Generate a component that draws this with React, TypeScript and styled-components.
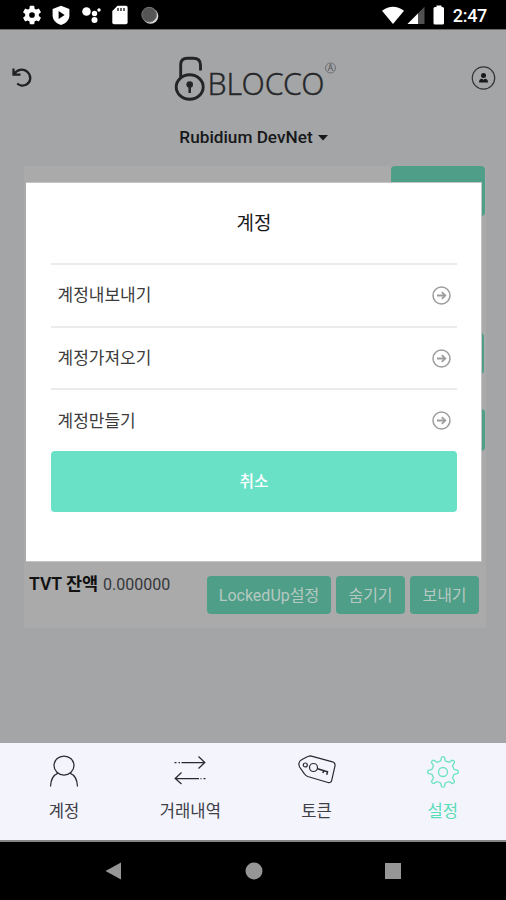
import React from "react";
import styled, { createGlobalStyle } from "styled-components";

const GlobalStyle = createGlobalStyle`
  * { box-sizing: border-box; }
  body { margin: 0; background: #a4a5a7; }
  button { border: 0; padding: 0; font: inherit; }
`;

const Phone = styled.div`
  width: 506px;
  height: 900px;
  display: flex;
  flex-direction: column;
  overflow: hidden;
  color: #17181a;
  font-family: Roboto, "Noto Sans CJK KR", sans-serif;
`;

const StatusBar = styled.header`
  height: 30px;
  flex: none;
  background: #000;
  border-bottom: 1px solid #686868;
  display: flex;
  justify-content: space-between;
  align-items: center;
  padding: 1px 19px 0 22px;
`;

const StatusGroup = styled.div<{ $gap: number }>`
  display: flex;
  align-items: center;
  gap: ${(p) => p.$gap}px;
`;

const Clock = styled.span`
  color: #fff;
  font-size: 18px;
  font-weight: 500;
  line-height: 20px;
  letter-spacing: -0.3px;
  margin-left: 2px;
  padding-top: 2px;
`;

const Screen = styled.main`
  position: relative;
  height: 713px;
  flex: none;
  background: #a4a5a7;
`;

const TopBar = styled.div`
  height: 90px;
  padding: 24px 10px 0 11px;
  display: flex;
  justify-content: space-between;
  align-items: flex-start;
`;

const IconSlot = styled.div<{ $top: number; $left?: number }>`
  display: flex;
  padding-top: ${(p) => p.$top}px;
  padding-left: ${(p) => p.$left ?? 0}px;
`;

const NetworkPicker = styled.div`
  height: 46px;
  padding: 5px 0 0 1px;
  display: flex;
  justify-content: center;
  align-items: flex-start;
  gap: 5px;
  font-size: 17.2px;
  font-weight: 500;
  line-height: 24px;
  svg { margin-top: 10px; }
`;

const Card = styled.section`
  width: 462px;
  height: 462px;
  margin-left: 24px;
  background: #aaaaaa;
  display: flex;
  flex-direction: column;
  align-items: flex-end;
`;

const ActionButton = styled.button<{ $w: number; $h: number }>`
  width: ${(p) => p.$w}px;
  height: ${(p) => p.$h}px;
  flex: none;
  border-radius: 4px;
  background: #4f9e88;
  color: #b5c9c1;
  font-size: 16px;
  line-height: 24px;
  padding-top: 2px;
  white-space: nowrap;
`;

const CardAction = styled.div<{ $top: number; $right: number }>`
  margin-top: ${(p) => p.$top}px;
  margin-right: ${(p) => p.$right}px;
  display: flex;
`;

const BalanceRow = styled.div`
  width: 100%;
  margin-top: 125px;
  padding: 0 7px 0 5px;
  display: flex;
  align-items: flex-start;
  justify-content: space-between;
`;

const Balance = styled.div`
  font-size: 16px;
  line-height: 24px;
  margin-top: -4px;
  white-space: nowrap;
  color: #36373a;
  b { font-size: 17.5px; color: #111; font-weight: 600; margin-right: 1px; }
`;

const Buttons = styled.div`
  display: flex;
  gap: 5px;
`;

const Dialog = styled.section`
  position: absolute;
  left: 26px;
  top: 152px;
  width: 456px;
  height: 380px;
  padding: 0 24px 0 25px;
  background: #fff;
  border: 1px solid #c4c4c4;
  border-width: 1px 1px 1px 0;
`;

const DialogTitle = styled.h1`
  margin: 0;
  height: 80px;
  padding-top: 29px;
  text-align: center;
  font-size: 19px;
  font-weight: 400;
  line-height: 24px;
`;

const MenuRow = styled.div`
  height: 62.7px;
  border-top: 2px solid #ebebeb;
  padding: 0 6px 0 6.5px;
  display: flex;
  align-items: center;
  justify-content: space-between;
  font-size: 17px;
  line-height: 24px;
  color: #3c3c3c;
`;

const CancelButton = styled.button`
  width: 100%;
  height: 61px;
  border-radius: 4px;
  background: #69e1c7;
  color: #fff;
  font-size: 15.7px;
  font-weight: 500;
  padding-bottom: 3px;
`;

const TabBar = styled.nav`
  height: 99px;
  flex: none;
  background: #f3f4fc;
  border-bottom: 2px solid #858588;
  display: grid;
  grid-template-columns: repeat(4, 1fr);
  padding-left: 1px;
`;

const Tab = styled.div<{ $active?: boolean }>`
  display: flex;
  flex-direction: column;
  align-items: center;
  padding-top: 11px;
  gap: 10px;
  font-size: 16.6px;
  line-height: 24px;
  color: ${(p) => (p.$active ? "#5bdcb9" : "#3e4046")};
  svg { display: block; }
`;

const SystemBar = styled.footer`
  height: 58px;
  flex: none;
  background: #000;
  display: flex;
  align-items: center;
  justify-content: space-between;
  padding: 0 105px 0 105px;
`;

const GEAR =
  "M19.14 12.94c.04-.3.06-.61.06-.94s-.02-.64-.07-.94l2.03-1.58a.49.49 0 0 0 .12-.61l-1.92-3.32a.49.49 0 0 0-.59-.22l-2.39.96a7 7 0 0 0-1.62-.94l-.36-2.54A.48.48 0 0 0 13.92 2.4h-3.84a.47.47 0 0 0-.47.41l-.36 2.54c-.59.24-1.13.57-1.62.94l-2.39-.96a.47.47 0 0 0-.59.22L2.74 8.87a.47.47 0 0 0 .12.61l2.03 1.58a7 7 0 0 0 0 1.88l-2.03 1.58a.49.49 0 0 0-.12.61l1.92 3.32c.12.22.37.29.59.22l2.39-.96c.5.38 1.03.7 1.62.94l.36 2.54c.05.24.24.41.48.41h3.84c.24 0 .44-.17.47-.41l.36-2.54a7 7 0 0 0 1.62-.94l2.39.96c.22.08.47 0 .59-.22l1.92-3.32a.47.47 0 0 0-.12-.61zM12 15a3 3 0 1 1 0-6 3 3 0 0 1 0 6z";

const SystemIcons = () => (
  <StatusGroup $gap={9.4}>
    <svg width="20" height="20" viewBox="1.5 1.5 21 21" fill="#fff"><path d={GEAR} fillRule="evenodd" /></svg>
    <svg width="20" height="21" viewBox="0 0 20 21">
      <path d="M10 .8 18.4 4v6.2c0 4.6-3.3 8-8.4 9.9C4.9 18.200 1.600 14.800 1.600 10.200V4z" fill="#fff" />
      <path d="m7.600 6 6 4-6 4z" fill="#000" />
    </svg>
    <svg width="21" height="20" viewBox="0 0 21 20" fill="#fff">
      <circle cx="5.500" cy="6.500" r="4.300" /><circle cx="13.500" cy="8.500" r="2.700" />
      <circle cx="18" cy="5" r="1.700" /><circle cx="13.500" cy="15" r="3" />
    </svg>
    <svg width="18" height="20" viewBox="0 0 18 20">
      <path d="M6.500 .8h8.500q1.600 0 1.600 1.600v15.200q0 1.600-1.600 1.600H2.900q-1.600 0-1.600-1.600V6z" fill="#fff" />
      <path d="M7 3v3M10 3v3M13 3v3" stroke="#333" strokeWidth="1.500" />
    </svg>
    <svg width="20" height="20" viewBox="0 0 20 20">
      <circle cx="11.500" cy="11" r="7.800" fill="#ddd" /><circle cx="10.200" cy="9.700" r="7.400" fill="#555" stroke="#777" />
    </svg>
  </StatusGroup>
);

const Signals = () => (
  <StatusGroup $gap={3}>
    <svg width="22" height="19" viewBox="0 0 22 19"><path d="M0 4.800Q11-3.500 22 4.800L11 18z" fill="#fff" /></svg>
    <svg width="18" height="19" viewBox="0 0 18 19">
      <path d="M17.500 .8V18H.5z" fill="#515151" /><path d="M11 7.400V18H.5z" fill="#fff" />
    </svg>
    <svg width="20" height="20" viewBox="0 0 20 20">
      <path d="M8.500 .5h5V2h1q1.500 0 1.500 1.500v14.500q0 1.500-1.500 1.500H7q-1.500 0-1.500-1.500V3.500Q5.500 2 7 2h1.500z" fill="#fff" />
    </svg>
    <Clock>2:47</Clock>
  </StatusGroup>
);

const Logo = () => (
  <svg width="166" height="50" viewBox="0 0 166 50">
    <g fill="none" stroke="#222426" strokeWidth="2.900">
      <path d="M6.700 24V10.500Q6.700 4.300 13.500 4.300H19Q26.500 4.300 26.500 11V16.500" />
      <ellipse cx="15.700" cy="33" rx="13.500" ry="12.200" />
    </g>
    <circle cx="15.700" cy="30.500" r="3.300" fill="#222426" />
    <path d="M15.700 31v8" stroke="#222426" strokeWidth="2.500" />
    <text x="33.500" y="41" textLength="117" lengthAdjust="spacingAndGlyphs" fill="#26282a" stroke="#26282a" strokeWidth=".35" fontFamily="Noto Sans, Open Sans, sans-serif" fontWeight="300" fontSize="30.500">BLOCCO</text>
    <circle cx="156.500" cy="14" r="5" fill="none" stroke="#5e6062" strokeWidth=".8" />
    <text x="156.500" y="17.200" textAnchor="middle" fill="#4f5153" fontFamily="Noto Sans, sans-serif" fontSize="8.500">A</text>
  </svg>
);

const Arrow = () => (
  <svg width="19" height="19" viewBox="0 0 19 19" fill="none" stroke="#9d9d9d" strokeWidth="1.500">
    <circle cx="9.500" cy="9.500" r="8.500" />
    <path d="M5 9.500h8" strokeWidth="2" /><path d="m9.800 6.200 3.500 3.300-3.500 3.300" strokeWidth="1.800" />
  </svg>
);

const PersonIcon = () => (
  <svg width="36" height="36" viewBox="0 0 36 36" fill="none" stroke="#292b2e" strokeWidth="1.250">
    <ellipse cx="18" cy="11.500" rx="10" ry="9.500" />
    <path d="M4.500 32.500c.2-6 2.700-11.300 7.600-13.300M31.500 32.500c-.2-6-2.700-11.300-7.600-13.300" />
  </svg>
);
const TransferIcon = () => (
  <svg width="36" height="36" viewBox="0 0 36 36" fill="none" stroke="#292b2e" strokeWidth="1.250">
    <path d="M2.500 8.500h2M6.500 8.500h1.500M9.500 8.500h23M26.500 2.500l6.300 6-6.300 6M27 24.500H3M9.500 18.500l-6.300 6 6.300 5.500M28.500 24.500h1M31.500 24.500h2" />
  </svg>
);
const TagIcon = () => (
  <svg width="42" height="36" viewBox="0 0 42 36" fill="none" stroke="#292b2e" strokeWidth="1.200">
    <path d="m14.500 1.800 22 6q3 .9 2.500 4l-3.300 14.500q-.7 3-3.700 2.200L11.700 22.500q-2.200-.8-3.300-2.700L3.600 13q-2.200-5 2-7.300l3.700-2q2.500-1.600 5.200-1.900z" />
    <circle cx="9.300" cy="11" r="2" /><circle cx="17.500" cy="13.500" r="4" />
    <path d="m21.500 14.700 10 3-.8 3M27.600 16.700l-.7 2.300" strokeWidth="1.500" />
  </svg>
);
const SettingsIcon = () => (
  <svg width="36" height="36" viewBox="0 0 36 36" fill="none" stroke="#6ee2c4" strokeWidth="1.300">
    <path strokeLinejoin="round" d="M15.700 6.800 16.600 3q1.400-.8 2.800 0l.9 3.800 3.700 1.500 3.400-2.200q1.800.3 2.200 2.200L27.500 11.700 29 15.300l3.800 1q1 1.700 0 3L29 20.300 27.500 24l2.100 3.400q-.3 1.800-2.200 2.200L24 27.500 20.300 29l-.9 3.800q-1.400.8-2.800 0L15.700 29 12 27.500l-3.400 2.100q-1.800-.4-2.200-2.200L8.500 24 7 20.300l-3.800-1q-1-1.300 0-3l3.800-1 1.500-3.600-2.100-3.400q.4-1.900 2.200-2.200L12 8.300z" />
    <circle cx="18" cy="18" r="4.500" />
  </svg>
);

const MENU = ["계정내보내기", "계정가져오기", "계정만들기"];
const TABS = [
  { label: "계정", Icon: PersonIcon },
  { label: "거래내역", Icon: TransferIcon },
  { label: "토큰", Icon: TagIcon },
  { label: "설정", Icon: SettingsIcon, active: true },
];

export default function App() {
  return (
    <>
      <GlobalStyle />
      <Phone>
        <StatusBar><SystemIcons /><Signals /></StatusBar>
        <Screen>
          <TopBar>
            <IconSlot $top={13}>
              <svg width="22" height="22" viewBox="0 0 22 22" fill="none" stroke="#202224" strokeWidth="2.300">
                <path d="M2.500 1.500v6.200h7M3 7.200C6 2.300 12 1.400 16 4.500 20.800 8.700 20 15 15.500 17.600c-3 1.700-6.900 1.100-9.300-1.100" />
              </svg>
            </IconSlot>
            <IconSlot $top={0} $left={9}><Logo /></IconSlot>
            <IconSlot $top={12}>
              <svg width="25" height="25" viewBox="0 0 25 25">
                <circle cx="12.500" cy="12" r="11.200" fill="none" stroke="#303235" strokeWidth="1.200" />
                <circle cx="12.500" cy="9.500" r="2.500" fill="#17191b" />
                <path d="M8 16.500q0-3.500 3-3.700l1.500 1 1.500-1q3 .2 3 3.700z" fill="#17191b" />
              </svg>
            </IconSlot>
          </TopBar>
          <NetworkPicker>
            Rubidium DevNet
            <svg width="10" height="6" viewBox="0 0 10 6"><path d="M0 0h10L5 5.500z" fill="#17181a" /></svg>
          </NetworkPicker>
          <Card>
            <CardAction $top={0} $right={1}><ActionButton $w={94} $h={50} /></CardAction>
            <CardAction $top={117} $right={2}><ActionButton $w={68} $h={41} /></CardAction>
            <CardAction $top={35} $right={1}><ActionButton $w={68} $h={42} /></CardAction>
            <BalanceRow>
              <Balance><b>TVT 잔액</b> 0.000000</Balance>
              <Buttons>
                <ActionButton $w={124} $h={38}>LockedUp설정</ActionButton>
                <ActionButton $w={69} $h={38}>숨기기</ActionButton>
                <ActionButton $w={69} $h={38}>보내기</ActionButton>
              </Buttons>
            </BalanceRow>
          </Card>
          <Dialog>
            <DialogTitle>계정</DialogTitle>
            {MENU.map((label) => <MenuRow key={label}>{label}<Arrow /></MenuRow>)}
            <CancelButton>취소</CancelButton>
          </Dialog>
        </Screen>
        <TabBar>
          {TABS.map(({ label, Icon, active }) => (
            <Tab key={label} $active={active}><Icon />{label}</Tab>
          ))}
        </TabBar>
        <SystemBar>
          <svg width="17" height="18" viewBox="0 0 17 18"><path d="M.5 9 16 .5v17z" fill="#969696" /></svg>
          <svg width="18" height="18" viewBox="0 0 18 18"><circle cx="9" cy="9" r="8.500" fill="#969696" /></svg>
          <svg width="16" height="16" viewBox="0 0 16 16"><path d="M0 0h16v16H0z" fill="#969696" /></svg>
        </SystemBar>
      </Phone>
    </>
  );
}
